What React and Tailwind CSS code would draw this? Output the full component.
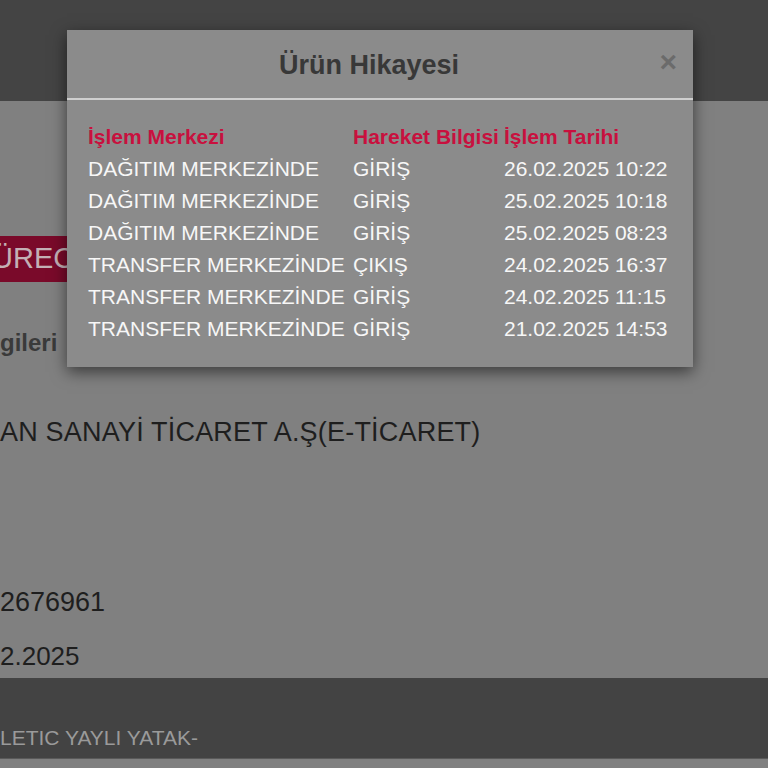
import React from "react";

const rows = [
  ["DAĞITIM MERKEZİNDE", "GİRİŞ", "26.02.2025 10:22"],
  ["DAĞITIM MERKEZİNDE", "GİRİŞ", "25.02.2025 10:18"],
  ["DAĞITIM MERKEZİNDE", "GİRİŞ", "25.02.2025 08:23"],
  ["TRANSFER MERKEZİNDE", "ÇIKIŞ", "24.02.2025 16:37"],
  ["TRANSFER MERKEZİNDE", "GİRİŞ", "24.02.2025 11:15"],
  ["TRANSFER MERKEZİNDE", "GİRİŞ", "21.02.2025 14:53"],
];

export default function App() {
  return (
    <div
      className="relative h-[768px] w-[768px] overflow-hidden bg-[#808080]"
      style={{ fontFamily: '"Liberation Sans", Arial, sans-serif' }}
    >
      {/* page behind the dialog */}
      <div className="flex h-full flex-col">
        <div className="h-[101px] shrink-0 bg-[#444444]" />
        <div className="mt-[135px] flex h-[46px] w-[120px] items-center overflow-hidden bg-[#7a0a2a]">
          <span className="-ml-[8px] whitespace-nowrap text-[29px] text-[#c4b0b5]">ÜREC</span>
        </div>
        <div className="mt-[46px] flex h-[30px] items-center whitespace-nowrap text-[24px] font-bold text-[#3a3a3a]">
          gileri
        </div>
        <div className="mt-[59px] flex h-[30px] items-center whitespace-nowrap text-[27px] tracking-[0.2px] text-[#1e1e1e]">
          AN SANAYİ TİCARET A.Ş(E-TİCARET)
        </div>
        <div className="mt-[140px] flex h-[30px] items-center text-[27px] text-[#1e1e1e]">2676961</div>
        <div className="mt-[24px] flex h-[30px] items-center text-[26px] text-[#1e1e1e]">2.2025</div>
        <div className="mt-[7px] flex h-[80px] shrink-0 items-end bg-[#434343] pb-[8px]">
          <div className="flex h-[24px] items-center whitespace-nowrap text-[21px] text-[#9a9a9a]">
            LETIC YAYLI YATAK-
          </div>
        </div>
        <div className="h-[1px] bg-[#5a5a5a]" />
      </div>

      {/* dialog */}
      <div className="absolute left-[67px] top-[30px] h-[337px] w-[626px] bg-[#8b8b8b] shadow-[0_5px_15px_rgba(0,0,0,0.55)]">
        <div className="relative flex h-[70px] items-center justify-center border-b-2 border-[#cfcfcf] pr-[22px] pt-[2px]">
          <h2 className="text-[27px] font-bold text-[#383838]">Ürün Hikayesi</h2>
          <span className="absolute right-[16px] top-[17px] text-[30px] font-bold leading-none text-[#6b6b6b]">×</span>
        </div>
        <div className="px-[21px] pt-[21px]">
          <div className="grid grid-cols-[265px_151px_auto] text-[21px] leading-[32px]">
            <div className="font-bold text-[#c8103e]">İşlem Merkezi</div>
            <div className="whitespace-nowrap font-bold text-[#c8103e]">Hareket Bilgisi</div>
            <div className="font-bold text-[#c8103e]">İşlem Tarihi</div>
            {rows.map((r, i) => (
              <React.Fragment key={i}>
                <div className="whitespace-nowrap text-[#f7f7f7]">{r[0]}</div>
                <div className="text-[#f7f7f7]">{r[1]}</div>
                <div className="text-[#f7f7f7]">{r[2]}</div>
              </React.Fragment>
            ))}
          </div>
        </div>
      </div>
    </div>
  );
}
